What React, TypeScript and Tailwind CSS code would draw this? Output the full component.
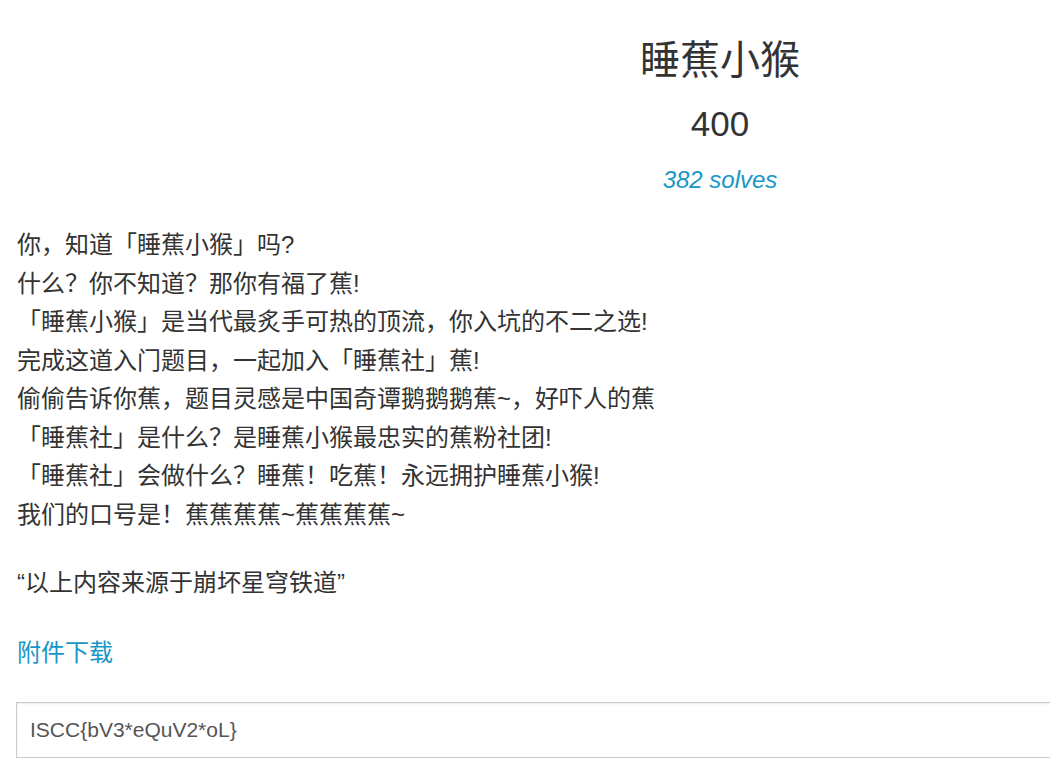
const lines = [
  "你，知道「睡蕉小猴」吗?",
  "什么？你不知道？那你有福了蕉!",
  "「睡蕉小猴」是当代最炙手可热的顶流，你入坑的不二之选!",
  "完成这道入门题目，一起加入「睡蕉社」蕉!",
  "偷偷告诉你蕉，题目灵感是中国奇谭鹅鹅鹅蕉~，好吓人的蕉",
  "「睡蕉社」是什么？是睡蕉小猴最忠实的蕉粉社团!",
  "「睡蕉社」会做什么？睡蕉！吃蕉！永远拥护睡蕉小猴!",
  "我们的口号是！蕉蕉蕉蕉~蕉蕉蕉蕉~",
];

export default function App() {
  return (
    <div
      className="w-[1050px] h-[773px] overflow-hidden bg-white text-[#333]"
      style={{ fontFamily: '"Liberation Sans", "Noto Sans CJK SC", sans-serif' }}
    >
      <div className="w-[1406px] ml-[17px]">
        <div className="text-center">
          <h2 className="mt-[36px] text-[40px] leading-[48px] font-normal">睡蕉小猴</h2>
          <h3 className="mt-[19px] text-[35px] leading-[42px] font-normal">400</h3>
          <div className="mt-[20px] text-[24px] leading-[30px] italic text-[#1797c7]">382 solves</div>
        </div>

        <div className="mt-[31px] text-[24px] leading-[38.5px]">
          {lines.map((line, i) => (
            <div key={i}>{line}</div>
          ))}
        </div>

        <div className="mt-[30px] text-[24px] leading-[38.5px]">“以上内容来源于崩坏星穹铁道”</div>

        <div className="mt-[31px] text-[24px] leading-[38.5px] text-[#1797c7]">附件下载</div>

        <div className="mt-[30px] -ml-[1px] h-[56px] border border-[#ccc] shadow-[inset_0_1px_2px_rgba(0,0,0,0.075)] flex items-center px-[13px] text-[21px] text-[#555]">
          ISCC{"{"}bV3*eQuV2*oL{"}"}
        </div>
      </div>
    </div>
  );
}
